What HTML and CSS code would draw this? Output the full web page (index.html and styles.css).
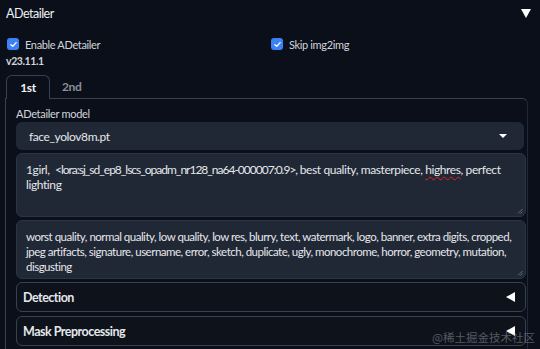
FILE: index.html
```html
<!DOCTYPE html>
<html lang="en">
<head>
  <meta charset="UTF-8">
  <title>ADetailer</title>
  <meta name="viewport" content="width=device-width, initial-scale=1">
  <link rel="stylesheet" href="styles.css">
</head>
<body>
  <div class="block">
    <div class="head">
      <span>ADetailer</span>
      <span class="tri-down"></span>
    </div>

    <div class="checks">
      <label class="check"><span class="box"><svg viewBox="0 0 12 12" width="9" height="9"><path d="M2.5 6.2 L5 8.5 L9.5 3.5" fill="none" stroke="#fff" stroke-width="1.8" stroke-linecap="round" stroke-linejoin="round"/></svg></span>Enable ADetailer</label>
      <label class="check"><span class="box"><svg viewBox="0 0 12 12" width="9" height="9"><path d="M2.5 6.2 L5 8.5 L9.5 3.5" fill="none" stroke="#fff" stroke-width="1.8" stroke-linecap="round" stroke-linejoin="round"/></svg></span>Skip img2img</label>
    </div>

    <div class="version">v23.11.1</div>

    <div class="tabs">
      <div class="tab active">1st</div>
      <div class="tab">2nd</div>
    </div>

    <div class="panel">
      <div class="label">ADetailer model</div>
      <div class="dropdown">
        <span class="value">face_yolov8m.pt</span>
        <span class="caret"></span>
      </div>
      <div class="textarea tall">1girl,&nbsp; <span class="lora">&lt;lora:sj_sd_ep8_lscs_opadm_nr128_na64-000007:0.9&gt;,</span> best quality, masterpiece, <span class="typo">highres</span>, perfect<br>lighting<svg class="grip" viewBox="0 0 6 6" width="6" height="6"><path d="M1 5.5 L5.5 1 M3.5 5.5 L5.5 3.5" stroke="#6b7280" stroke-width="0.9"/></svg></div>
      <div class="textarea tight">worst quality, normal quality, low quality, low res, blurry, text, watermark, logo, banner, extra digits, cropped, jpeg artifacts, signature, username, error, sketch, duplicate, ugly, monochrome, horror, geometry, mutation, disgusting<svg class="grip" viewBox="0 0 6 6" width="6" height="6"><path d="M1 5.5 L5.5 1 M3.5 5.5 L5.5 3.5" stroke="#6b7280" stroke-width="0.9"/></svg></div>
      <div class="accordion">
        <span>Detection</span>
        <span class="tri-left"></span>
      </div>
      <div class="accordion">
        <span>Mask Preprocessing</span>
        <span class="tri-left"></span>
      </div>
    </div>
  </div>

  <div class="watermark">@稀土掘金技术社区</div>
</body>
</html>
```

FILE: styles.css
```css
body {
  margin: 0;
  background: #0b0f19;
  color: #e5e7eb;
  font-family: Lato, "Noto Sans", sans-serif;
  font-size: 12px;
  letter-spacing: -0.4px;
  overflow: hidden;
}
.block {
  padding: 0 6px;
}
.head {
  display: flex;
  justify-content: space-between;
  align-items: center;
  height: 26px;
  font-size: 12.5px;
  letter-spacing: -0.5px;
  color: #eef0f3;
}
.tri-down {
  width: 0;
  height: 0;
  border-left: 5px solid transparent;
  border-right: 5px solid transparent;
  border-top: 9px solid #fff;
  margin-right: 3px;
}
.checks {
  display: grid;
  grid-template-columns: 264px 1fr;
  margin-top: 11px;
  height: 14px;
  align-items: center;
}
.check {
  display: flex;
  align-items: center;
  gap: 6px;
  font-size: 11px;
  letter-spacing: -0.35px;
  color: #d1d5db;
}
.box {
  width: 12px;
  height: 12px;
  border-radius: 3px;
  background: #3b82f6;
  display: flex;
  align-items: center;
  justify-content: center;
  margin-left: 1px;
}
.version {
  margin-top: 3px;
  font-size: 10.5px;
  letter-spacing: -0.4px;
  font-weight: bold;
  color: #d1d5db;
  height: 14px;
  line-height: 14px;
}
.tabs {
  display: flex;
  margin-top: 7px;
  height: 23px;
  align-items: stretch;
}
.tab {
  display: flex;
  align-items: center;
  justify-content: center;
  padding: 0 12px;
  font-size: 12px;
  font-weight: bold;
  color: #8a8f98;
}
.tab.active {
  width: 42px;
  padding: 0;
  color: #f3f4f6;
  border: 1px solid #374151;
  border-bottom: none;
  border-radius: 6px 6px 0 0;
  background: #0b0f19;
  position: relative;
  z-index: 1;
  margin-bottom: -1px;
}
.panel {
  border: 1px solid #374151;
  border-right: 1px solid #1f2937;
  margin-left: -1px;
  margin-right: 6px;
  padding: 8px 1px 6px 10px;
  display: flex;
  flex-direction: column;
  gap: 3px;
  border-radius: 0 6px 0 0;
}
.label {
  font-size: 11px;
  letter-spacing: -0.3px;
  color: #d1d5db;
  height: 14px;
  line-height: 14px;
  margin-bottom: -2px;
}
.dropdown {
  display: flex;
  justify-content: space-between;
  align-items: center;
  height: 28px;
  margin-right: 2px;
  padding: 0 17px 0 13px;
  background: #212835;
  border-radius: 6px;
  color: #e5e7eb;
}
.caret {
  width: 0;
  height: 0;
  border-left: 4px solid transparent;
  border-right: 4px solid transparent;
  border-top: 4px solid #fff;
}
.textarea {
  background: #212835;
  border: 1px solid #2d3544;
  border-radius: 6px;
  padding: 8px 8px 8px 9px;
  line-height: 15px;
  color: #e5e7eb;
  height: 41px;
  position: relative;
}
.textarea.tall {
  height: 46px;
}
.textarea.tight {
  font-size: 11.5px;
  letter-spacing: -0.5px;
}
.lora {
  letter-spacing: -1px;
}
.grip {
  position: absolute;
  right: 2px;
  bottom: 2px;
}
.typo {
  text-decoration: underline wavy #dc2626;
  text-decoration-thickness: 1px;
  text-underline-offset: 2px;
}
.accordion {
  display: flex;
  justify-content: space-between;
  align-items: center;
  height: 28px;
  padding: 0 10px 0 6px;
  border: 1px solid #374151;
  border-radius: 6px;
  background: #0e121b;
  font-size: 12.5px;
  letter-spacing: -0.5px;
  font-weight: bold;
  color: #e5e7eb;
}
.accordion + .accordion {
  margin-top: 1px;
}
.tri-left {
  width: 0;
  height: 0;
  border-top: 5px solid transparent;
  border-bottom: 5px solid transparent;
  border-right: 9px solid #fff;
}
.watermark {
  position: absolute;
  right: 5px;
  bottom: 6px;
  font-family: "Noto Sans CJK SC", sans-serif;
  font-size: 11.5px;
  line-height: 1;
  letter-spacing: 0;
  color: rgba(160, 160, 170, 0.5);
}
```
